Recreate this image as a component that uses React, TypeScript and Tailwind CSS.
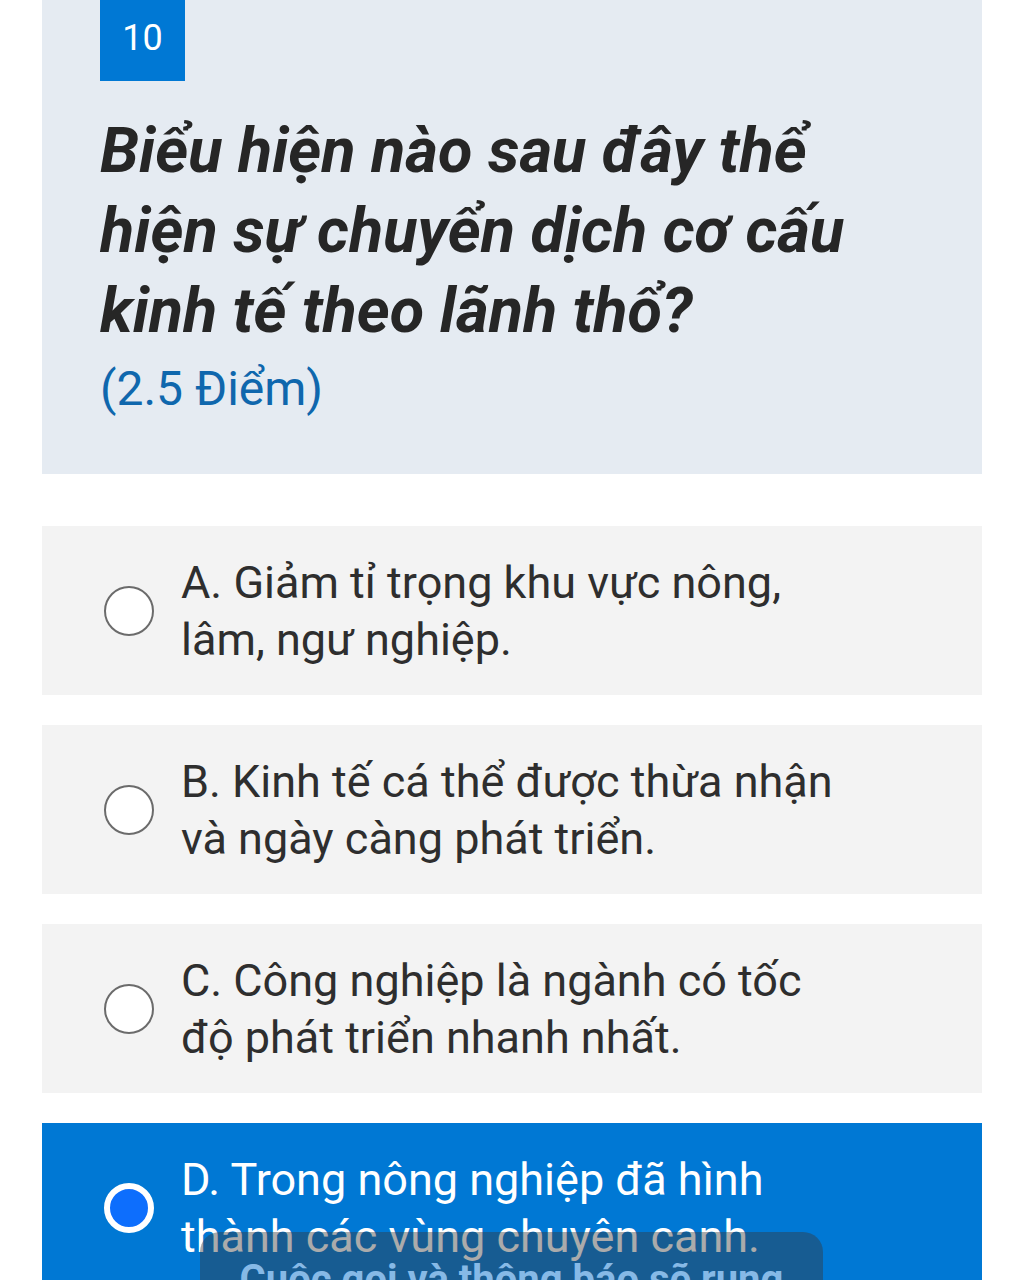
import React from 'react';

const font = { fontFamily: 'Roboto, "Noto Sans", sans-serif' };

const options = [
  { id: 'A', lines: ['A. Giảm tỉ trọng khu vực nông,', 'lâm, ngư nghiệp.'] },
  { id: 'B', lines: ['B. Kinh tế cá thể được thừa nhận', 'và ngày càng phát triển.'] },
  { id: 'C', lines: ['C. Công nghiệp là ngành có tốc', 'độ phát triển nhanh nhất.'] },
  { id: 'D', lines: ['D. Trong nông nghiệp đã hình', 'thành các vùng chuyên canh.'] },
];

const selected = 'D';

export default function App() {
  return (
    <div className="relative min-h-[1280px] bg-white overflow-hidden font-['Roboto',sans-serif]" style={font}>
      {/* câu hỏi */}
      <div className="mx-[42px] bg-[#e5ebf2] pl-[58px] pr-6 pb-[57px]">
        <div className="w-[85px] h-[81px] bg-[#0078d4] text-white text-[36px] flex items-center justify-center pb-[6px]">
          10
        </div>
        <h1 className="mt-[30px] text-[63px] leading-[80px] font-bold italic text-[#262626] whitespace-nowrap">
          <span className="block">Biểu hiện nào sau đây thể</span>
          <span className="block">hiện sự chuyển dịch cơ cấu</span>
          <span className="block">kinh tế theo lãnh thổ?</span>
        </h1>
        <div className="mt-[9px] text-[48px] leading-[57px] text-[#0f67ad]">(2.5 Điểm)</div>
      </div>

      {/* đáp án */}
      <div className="mx-[42px] mt-[52px] flex flex-col gap-[30px]">
        {options.map((o) => {
          const active = o.id === selected;
          return (
            <div
              key={o.id}
              className={`h-[169px] flex items-center pl-[62px] ${active ? 'bg-[#0078d4]' : 'bg-[#f3f3f3]'}`}
            >
              {active ? (
                <div className="w-[50px] h-[50px] rounded-full border-[6px] border-white bg-[#0d6efd] shrink-0" />
              ) : (
                <div className="w-[50px] h-[50px] rounded-full border-[2.5px] border-[#6b6b6b] bg-white shrink-0" />
              )}
              <div
                className={`ml-[27px] text-[45px] leading-[57px] whitespace-nowrap ${active ? 'text-white' : 'text-[#2e2e2e]'}`}
              >
                {o.lines.map((l) => (
                  <span key={l} className="block">
                    {l}
                  </span>
                ))}
              </div>
            </div>
          );
        })}
      </div>

      {/* thông báo */}
      <div className="absolute left-[200px] top-[1232px] w-[623px] h-[90px] rounded-[20px] bg-[rgba(55,55,55,0.42)] flex justify-center pt-[24px]">
        <span className="text-[40px] leading-[48px] font-bold text-[#86b9e6]">Cuộc gọi và thông báo sẽ rung</span>
      </div>
    </div>
  );
}
